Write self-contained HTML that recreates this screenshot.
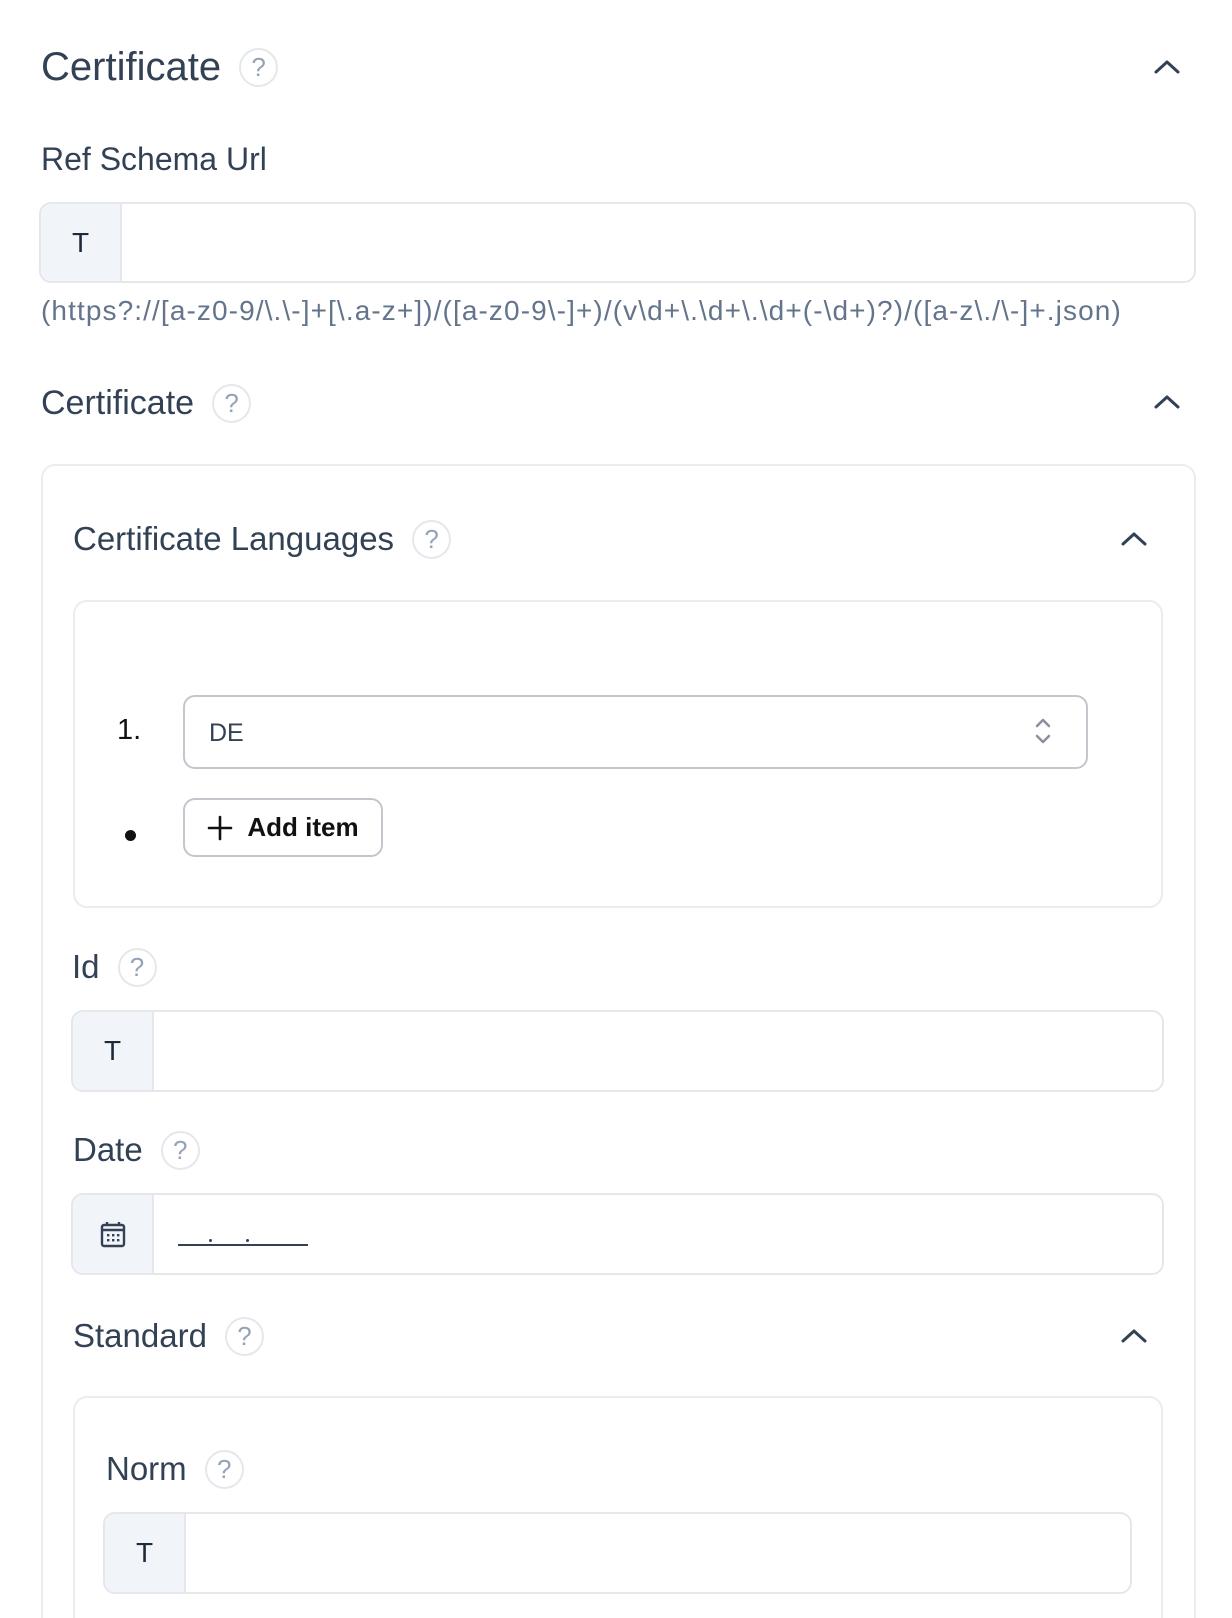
<!DOCTYPE html>
<html><head><meta charset="utf-8"><style>
*{box-sizing:border-box;margin:0;padding:0}
html,body{width:1232px;height:1618px;overflow:hidden;background:#fff}
body{font-family:"Liberation Sans",sans-serif;color:#334155}
#w{position:relative;width:1232px;height:1618px;overflow:hidden}
.a{position:absolute}
.lbl{position:absolute;display:flex;align-items:center;height:44px;white-space:nowrap;color:#334155}
.q{display:inline-flex;align-items:center;justify-content:center;width:39px;height:39px;border:2px solid #e5e7eb;border-radius:50%;color:#94a3b8;font-size:26px;margin-left:18px}
.inp{position:absolute;border:2px solid #e5e7eb;border-radius:12px;background:#fff;overflow:hidden}
.pre{position:absolute;left:0;top:0;bottom:0;width:81px;background:#f1f5f9;border-right:2px solid #e5e7eb;display:flex;align-items:center;justify-content:center;font-size:28px;color:#1e293b}
.card{position:absolute;border:2px solid #ececee;border-radius:14px;background:#fff}
.open{border-bottom:none;border-bottom-left-radius:0;border-bottom-right-radius:0}
.chev{position:absolute;width:28px;height:16px}
</style></head><body><div id="w">

<div class="lbl" style="left:41px;top:45px;font-size:40px">Certificate<span class="q">?</span></div>
<svg class="chev" style="left:1153px;top:59px" viewBox="0 0 28 16"><path d="M3 13 L14 3 L25 13" fill="none" stroke="#334155" stroke-width="3" stroke-linecap="round" stroke-linejoin="round"/></svg>

<div class="lbl" style="left:41px;top:137px;font-size:32px">Ref Schema Url</div>
<div class="inp" style="left:39px;top:202px;width:1157px;height:81px"><div class="pre">T</div></div>
<div class="a" style="left:41px;top:295px;font-size:28px;letter-spacing:1.1px;color:#64748b;white-space:nowrap">(https?://[a-z0-9/\.\-]+[\.a-z+])/([a-z0-9\-]+)/(v\d+\.\d+\.\d+(-\d+)?)/([a-z\./\-]+.json)</div>

<div class="lbl" style="left:41px;top:381px;font-size:34px">Certificate<span class="q">?</span></div>
<svg class="chev" style="left:1153px;top:394px" viewBox="0 0 28 16"><path d="M3 13 L14 3 L25 13" fill="none" stroke="#334155" stroke-width="3" stroke-linecap="round" stroke-linejoin="round"/></svg>

<div class="card open" style="left:41px;top:464px;width:1155px;height:1154px"></div>

<div class="lbl" style="left:73px;top:517px;font-size:33px">Certificate Languages<span class="q">?</span></div>
<svg class="chev" style="left:1120px;top:531px" viewBox="0 0 28 16"><path d="M3 13 L14 3 L25 13" fill="none" stroke="#334155" stroke-width="3" stroke-linecap="round" stroke-linejoin="round"/></svg>

<div class="card" style="left:73px;top:600px;width:1090px;height:308px"></div>
<div class="a" style="left:117px;top:714px;font-size:29px;color:#111">1.</div>
<div class="a" style="left:183px;top:695px;width:905px;height:74px;border:2px solid #c3c6cc;border-radius:12px"></div>
<div class="a" style="left:209px;top:719px;font-size:25px;color:#334155">DE</div>
<svg class="a" style="left:1032px;top:715px" width="22" height="32" viewBox="0 0 22 32"><path d="M5 11 L11 5 L17 11 M5 21 L11 27 L17 21" fill="none" stroke="#8a909c" stroke-width="2.5" stroke-linecap="round" stroke-linejoin="round"/></svg>
<div class="a" style="left:125px;top:830px;width:11px;height:11px;border-radius:50%;background:#111"></div>
<div class="a" style="left:183px;top:798px;width:200px;height:59px;border:2px solid #c3c6cc;border-radius:12px;display:flex;align-items:center;justify-content:center;font-size:26px;font-weight:bold;color:#111;white-space:nowrap"><svg width="26" height="26" viewBox="0 0 26 26" style="margin-right:14px"><path d="M13 2 V24 M2 13 H24" stroke="#111" stroke-width="2.6" stroke-linecap="round"/></svg>Add item</div>

<div class="lbl" style="left:72px;top:945px;font-size:33px">Id<span class="q">?</span></div>
<div class="inp" style="left:71px;top:1010px;width:1093px;height:82px"><div class="pre">T</div></div>

<div class="lbl" style="left:73px;top:1128px;font-size:33px">Date<span class="q">?</span></div>
<div class="inp" style="left:71px;top:1193px;width:1093px;height:82px"><div class="pre"><svg width="26" height="28" viewBox="0 0 26 28"><rect x="2" y="5" width="22" height="21" rx="2" fill="none" stroke="#334155" stroke-width="2.4"/><path d="M2 10 H24 M7 2 V6 M19 2 V6" stroke="#334155" stroke-width="2.4"/><g fill="#334155"><rect x="7" y="14" width="2.4" height="2.4"/><rect x="12" y="14" width="2.4" height="2.4"/><rect x="17" y="14" width="2.4" height="2.4"/><rect x="7" y="19" width="2.4" height="2.4"/><rect x="12" y="19" width="2.4" height="2.4"/><rect x="17" y="19" width="2.4" height="2.4"/></g></svg></div>
<div class="a" style="left:105px;top:49px;width:130px;height:2px;background:#334155"></div>
<div class="a" style="left:136px;top:44px;width:3px;height:3px;background:#334155;border-radius:50%"></div>
<div class="a" style="left:173px;top:44px;width:3px;height:3px;background:#334155;border-radius:50%"></div>
</div>

<div class="lbl" style="left:73px;top:1314px;font-size:33px">Standard<span class="q">?</span></div>
<svg class="chev" style="left:1120px;top:1328px" viewBox="0 0 28 16"><path d="M3 13 L14 3 L25 13" fill="none" stroke="#334155" stroke-width="3" stroke-linecap="round" stroke-linejoin="round"/></svg>

<div class="card open" style="left:73px;top:1396px;width:1090px;height:222px"></div>
<div class="lbl" style="left:106px;top:1447px;font-size:33px">Norm<span class="q">?</span></div>
<div class="inp" style="left:103px;top:1512px;width:1029px;height:82px"><div class="pre">T</div></div>

</div></body></html>
